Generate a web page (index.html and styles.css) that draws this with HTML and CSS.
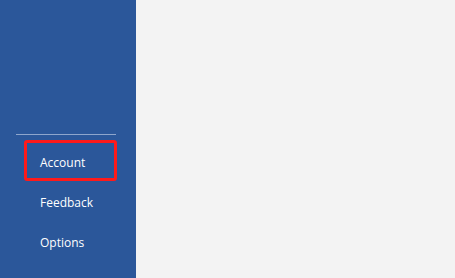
FILE: index.html
```html
<!DOCTYPE html>
<html>
<head>
<meta charset="utf-8">
<link rel="stylesheet" href="styles.css">
</head>
<body>
<div class="app">
  <aside class="sidebar">
    <div class="divider"></div>
    <ul class="nav">
      <li class="nav-item highlighted">Account</li>
      <li class="nav-item">Feedback</li>
      <li class="nav-item">Options</li>
    </ul>
  </aside>
  <main class="content"></main>
</div>
</body>
</html>
```
FILE: styles.css
```css
html, body {
  margin: 0;
  padding: 0;
}
body {
  font-family: "Open Sans", "Noto Sans", sans-serif;
  background: #f3f3f3;
}
.app {
  display: flex;
  width: 455px;
  height: 278px;
}
.sidebar {
  width: 136px;
  flex: none;
  background: #2b579a;
  display: flex;
  flex-direction: column;
  justify-content: flex-end;
  padding-bottom: 15px;
  box-sizing: border-box;
}
.divider {
  height: 1px;
  background: #8ea6cc;
  margin: 0 20px 8px 16px;
}
.nav {
  list-style: none;
  margin: 0;
  padding: 0;
}
.nav-item {
  position: relative;
  height: 40px;
  line-height: 40px;
  padding-left: 40px;
  color: #ffffff;
  font-size: 12px;
}
.nav-item.highlighted::after {
  content: "";
  position: absolute;
  left: 24px;
  top: -3px;
  width: 93px;
  height: 41px;
  box-sizing: border-box;
  border: 3px solid #ff1a1a;
  border-radius: 3px;
}
.content {
  flex: 1;
  background: #f3f3f3;
}
```
